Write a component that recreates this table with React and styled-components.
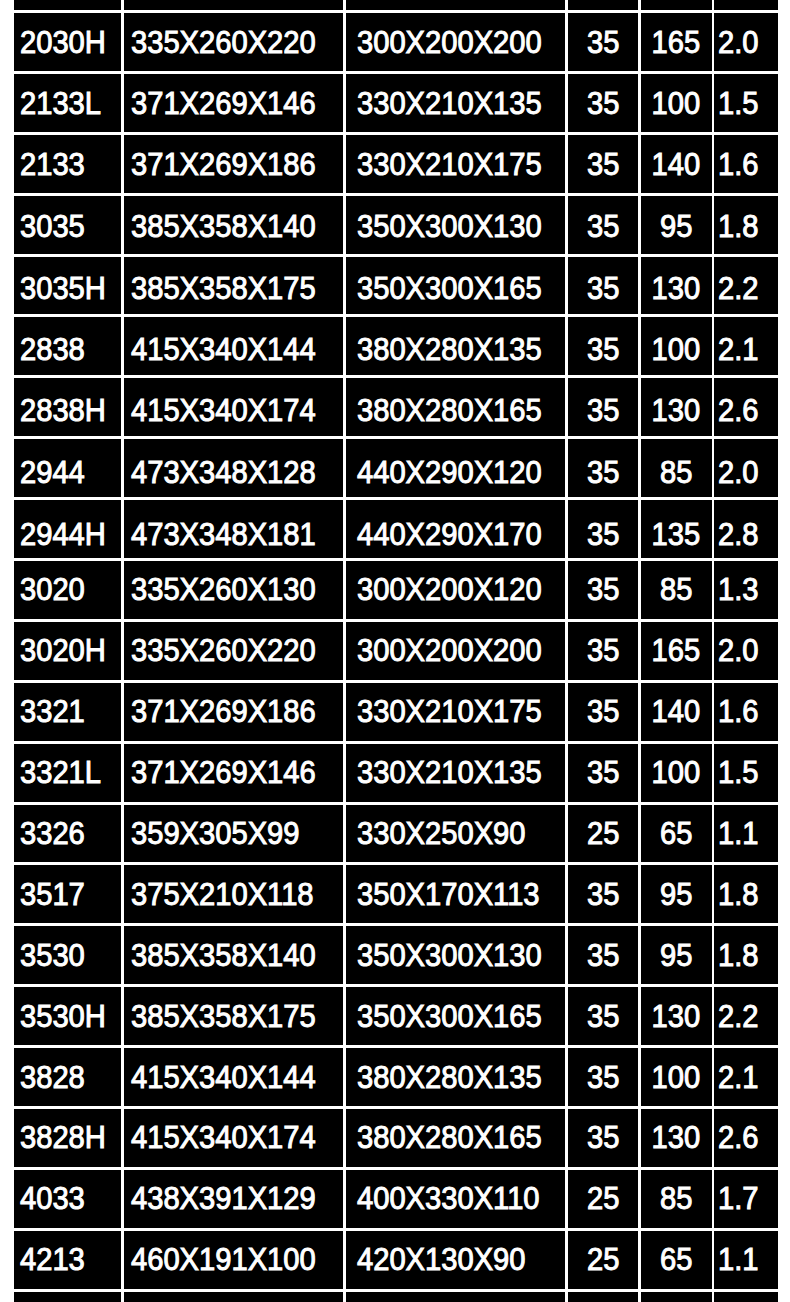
import React from 'react';
import styled, { createGlobalStyle } from 'styled-components';

const blackColor = '#000';
const whiteColor = '#FFF';

const GlobalStyle = createGlobalStyle`
  html, body {
    margin: 0;
    padding: 0;
    background: ${whiteColor};
  }
`;

const Page = styled.div`
  width: 790px;
  height: 1302px;
  overflow: hidden;
  background: ${whiteColor};
  padding-left: 14px;
  box-sizing: border-box;
`;

const Table = styled.div`
  display: flex;
  flex-direction: column;
  gap: 3px;
  width: 764px;
`;

const Row = styled.div`
  display: grid;
  grid-template-columns: 107px 219.5px 219.5px 70px 71px 64px;
  column-gap: 2.7px;
  height: ${(p) => (p.stub ? '10px' : '57.9px')};
`;

const Cell = styled.div`
  background: ${blackColor};
  color: ${whiteColor};
  font-family: "Liberation Sans", Arial, sans-serif;
  font-weight: 400;
  font-size: 31px;
  line-height: 1;
  display: flex;
  align-items: center;
  justify-content: ${(p) => (p.center ? 'center' : 'flex-start')};
  padding-left: ${(p) => p.pad || 0}px;
  padding-top: ${(p) => p.shift * 2}px;
  box-sizing: border-box;
  overflow: hidden;
  white-space: nowrap;
`;

const Text = styled.span`
  display: inline-block;
  -webkit-text-stroke: 1px ${whiteColor};
  transform: scaleX(0.94);
  transform-origin: ${(p) => (p.center ? 'center' : 'left')} center;
`;

const rows = [
  ['2030H', '335X260X220', '300X200X200', '35', '165', '2.0', 1],
  ['2133L', '371X269X146', '330X210X135', '35', '100', '1.5', 1],
  ['2133', '371X269X186', '330X210X175', '35', '140', '1.6', 1],
  ['3035', '385X358X140', '350X300X130', '35', '95', '1.8', 2],
  ['3035H', '385X358X175', '350X300X165', '35', '130', '2.2', 3],
  ['2838', '415X340X144', '380X280X135', '35', '100', '2.1', 3],
  ['2838H', '415X340X174', '380X280X165', '35', '130', '2.6', 3],
  ['2944', '473X348X128', '440X290X120', '35', '85', '2.0', 4],
  ['2944H', '473X348X181', '440X290X170', '35', '135', '2.8', 5],
  ['3020', '335X260X130', '300X200X120', '35', '85', '1.3', -1],
  ['3020H', '335X260X220', '300X200X200', '35', '165', '2.0', -1],
  ['3321', '371X269X186', '330X210X175', '35', '140', '1.6', -1],
  ['3321L', '371X269X146', '330X210X135', '35', '100', '1.5', -1],
  ['3326', '359X305X99', '330X250X90', '25', '65', '1.1', -1],
  ['3517', '375X210X118', '350X170X113', '35', '95', '1.8', -1],
  ['3530', '385X358X140', '350X300X130', '35', '95', '1.8', -1],
  ['3530H', '385X358X175', '350X300X165', '35', '130', '2.2', -1],
  ['3828', '415X340X144', '380X280X135', '35', '100', '2.1', -1],
  ['3828H', '415X340X174', '380X280X165', '35', '130', '2.6', -1],
  ['4033', '438X391X129', '400X330X110', '25', '85', '1.7', -1],
  ['4213', '460X191X100', '420X130X90', '25', '65', '1.1', -1],
];

const EmptyRow = () => (
  <Row stub>
    {[0, 1, 2, 3, 4, 5].map((i) => (
      <Cell key={i} shift={0} />
    ))}
  </Row>
);

const App = () => (
  <Page>
    <GlobalStyle />
    <Table>
      <EmptyRow />
      {rows.map(([model, outer, inner, a, b, weight, shift]) => (
        <Row key={model}>
          <Cell pad={6} shift={shift}><Text>{model}</Text></Cell>
          <Cell pad={7} shift={shift}><Text>{outer}</Text></Cell>
          <Cell pad={11} shift={shift}><Text>{inner}</Text></Cell>
          <Cell center shift={shift}><Text center>{a}</Text></Cell>
          <Cell center shift={shift}><Text center>{b}</Text></Cell>
          <Cell pad={4} shift={shift}><Text>{weight}</Text></Cell>
        </Row>
      ))}
      <EmptyRow />
    </Table>
  </Page>
);

export default App;
